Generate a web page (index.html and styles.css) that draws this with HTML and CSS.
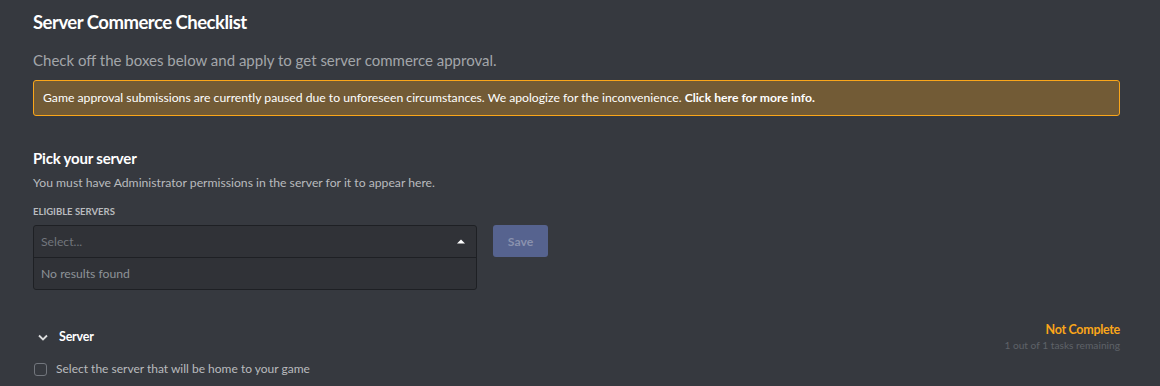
FILE: index.html
```html
<!DOCTYPE html>
<html>
<head>
<meta charset="utf-8">
<link rel="stylesheet" href="styles.css">
</head>
<body>
<div class="page">
  <h1 class="title">Server Commerce Checklist</h1>
  <p class="subtitle">Check off the boxes below and apply to get server commerce approval.</p>
  <div class="notice">Game approval submissions are currently paused due to unforeseen circumstances. We apologize for the inconvenience. <b>Click here for more info.</b></div>

  <h2 class="section-title">Pick your server</h2>
  <p class="section-desc">You must have Administrator permissions in the server for it to appear here.</p>
  <div class="label">Eligible Servers</div>
  <div class="picker-row">
    <div class="select">
      <div class="select-control">
        <span class="placeholder">Select...</span>
        <svg class="caret" width="8" height="5" viewBox="0 0 8 5"><path d="M0 4.5 L4 0.5 L8 4.5 Z" fill="#ffffff"/></svg>
      </div>
      <div class="select-menu">No results found</div>
    </div>
    <button class="save">Save</button>
  </div>

  <div class="group-head">
    <div class="group-name">
      <svg class="chev" width="10" height="7" viewBox="0 0 10 7"><path d="M1 1.5 L5 5.5 L9 1.5" stroke="#dcddde" stroke-width="1.8" fill="none"/></svg>
      <span>Server</span>
    </div>
    <div class="status">
      <div class="status-main">Not Complete</div>
      <div class="status-sub">1 out of 1 tasks remaining</div>
    </div>
  </div>
  <label class="task"><span class="box"></span><span>Select the server that will be home to your game</span></label>
</div>
</body>
</html>
```

FILE: styles.css
```css
html, body {
  margin: 0;
  padding: 0;
  background: #36393f;
  height: 386px;
  overflow: hidden;
}
body {
  font-family: Lato, "Open Sans", sans-serif;
  color: #dcddde;
}
.page {
  padding: 10px 40px 0 33px;
}
.title {
  margin: 0;
  font-size: 18.5px;
  letter-spacing: -0.5px;
  font-weight: 700;
  color: #ffffff;
  line-height: 24px;
}
.subtitle {
  margin: 15px 0 0;
  font-size: 15px;
  line-height: 22px;
  color: #a3a6aa;
}
.notice {
  margin-top: 9px;
  height: 36px;
  box-sizing: border-box;
  border: 1px solid #faa61a;
  border-radius: 3px;
  background: #725b36;
  color: #ffffff;
  font-size: 12.2px;
  line-height: 34px;
  padding: 0 9px;
}
.notice b { font-weight: 700; }
.section-title {
  margin: 32px 0 0;
  font-size: 15px;
  letter-spacing: -0.2px;
  font-weight: 700;
  color: #ffffff;
  line-height: 20px;
}
.section-desc {
  margin: 7px 0 0;
  font-size: 12.2px;
  line-height: 16px;
  color: #b9bbbe;
}
.label {
  margin-top: 15px;
  font-size: 9.5px;
  font-weight: 700;
  text-transform: uppercase;
  color: #b9bbbe;
  line-height: 12px;
}
.picker-row {
  margin-top: 7px;
  display: flex;
  align-items: flex-start;
  gap: 16px;
}
.select {
  width: 444px;
  box-sizing: border-box;
  border: 1px solid #1e2024;
  border-radius: 3px;
  background: #303237;
}
.select-control {
  height: 31px;
  display: flex;
  align-items: center;
  justify-content: space-between;
  padding: 0 11px 0 7px;
  border-bottom: 1px solid #1e2024;
}
.placeholder {
  font-size: 12.2px;
  color: #72767d;
}
.select-menu {
  height: 31px;
  line-height: 31px;
  padding: 0 7px;
  font-size: 12.2px;
  color: #8e9297;
}
.save {
  width: 55px;
  height: 32px;
  border: none;
  border-radius: 3px;
  background: #56638f;
  color: #8a92ae;
  font-family: inherit;
  font-size: 12.2px;
  font-weight: 700;
  padding: 0;
}
.group-head {
  margin-top: 32px;
  display: flex;
  justify-content: space-between;
  align-items: flex-start;
}
.group-name {
  display: flex;
  align-items: center;
  gap: 11px;
  padding-left: 5px;
  margin-top: 7px;
  line-height: 16px;
  font-size: 12.5px;
  letter-spacing: -0.2px;
  font-weight: 700;
  color: #ffffff;
}
.status {
  text-align: right;
}
.status-main {
  font-size: 12.5px;
  letter-spacing: -0.3px;
  font-weight: 700;
  color: #faa61a;
  line-height: 16px;
}
.status-sub {
  font-size: 10.2px;
  color: #5e6268;
  line-height: 14px;
}
.task {
  margin-top: 9px;
  display: flex;
  align-items: center;
  gap: 9px;
  line-height: 16px;
  font-size: 12px;
  color: #b9bbbe;
}
.box {
  width: 11px;
  height: 11px;
  border: 1.5px solid #72767d;
  border-radius: 3px;
  margin-left: 1px;
}
```
